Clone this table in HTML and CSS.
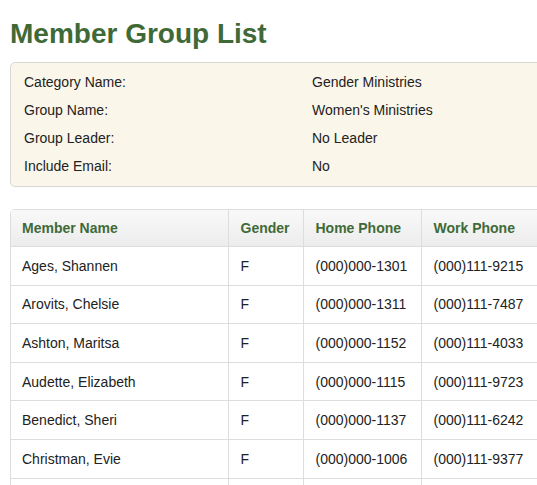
FILE: index.html
```html
<!DOCTYPE html>
<html>
<head>
<meta charset="utf-8">
<link rel="stylesheet" href="styles.css">
</head>
<body>
<h1 class="title">Member Group List</h1>
<div class="info">
  <div class="info-row"><span class="label">Category Name:</span><span class="value">Gender Ministries</span></div>
  <div class="info-row"><span class="label">Group Name:</span><span class="value">Women's Ministries</span></div>
  <div class="info-row"><span class="label">Group Leader:</span><span class="value">No Leader</span></div>
  <div class="info-row"><span class="label">Include Email:</span><span class="value">No</span></div>
</div>
<div class="table-wrap">
<table class="members">
  <colgroup><col class="c1"><col class="c2"><col class="c3"><col class="c4"></colgroup>
  <thead>
    <tr><th>Member Name</th><th>Gender</th><th>Home Phone</th><th>Work Phone</th></tr>
  </thead>
  <tbody>
    <tr><td>Ages, Shannen</td><td>F</td><td>(000)000-1301</td><td>(000)111-9215</td></tr>
    <tr><td>Arovits, Chelsie</td><td>F</td><td>(000)000-1311</td><td>(000)111-7487</td></tr>
    <tr><td>Ashton, Maritsa</td><td>F</td><td>(000)000-1152</td><td>(000)111-4033</td></tr>
    <tr><td>Audette, Elizabeth</td><td>F</td><td>(000)000-1115</td><td>(000)111-9723</td></tr>
    <tr><td>Benedict, Sheri</td><td>F</td><td>(000)000-1137</td><td>(000)111-6242</td></tr>
    <tr><td>Christman, Evie</td><td>F</td><td>(000)000-1006</td><td>(000)111-9377</td></tr>
    <tr><td></td><td></td><td></td><td></td></tr>
  </tbody>
</table>
</div>
</body>
</html>
```
FILE: styles.css
```css
html { overflow: hidden; }
body {
  margin: 0;
  padding: 0 0 0 10px;
  font-family: Arial, "Liberation Sans", sans-serif;
  font-size: 14px;
  color: #222;
  background: #fff;
}
.title {
  margin: 0;
  padding-top: 20px;
  height: 48px;
  box-sizing: border-box;
  font-size: 28px;
  line-height: 28px;
  font-weight: bold;
  color: #3f6a38;
}
.info {
  margin-top: 14px;
  width: 620px;
  background: #faf6ea;
  border: 1px solid #d8d8d4;
  border-radius: 5px;
  padding: 5px 0 6px 13px;
}
.info-row {
  display: flex;
  height: 28px;
  align-items: center;
}
.label { width: 288px; }
.table-wrap {
  margin-top: 22px;
  width: 640px;
  border: 1px solid #ddd;
  border-radius: 5px;
  overflow: hidden;
}
.members {
  border-collapse: collapse;
  table-layout: fixed;
  width: 100%;
}
.c1 { width: 217px; }
.c2 { width: 75px; }
.c3 { width: 118px; }
.members th, .members td {
  border-left: 1px solid #ddd;
  border-top: 1px solid #ddd;
  padding: 0 12px;
  height: 37.6px;
  text-align: left;
  white-space: nowrap;
}
.members tr > :first-child { border-left: none; padding-left: 11px; }
.members thead th {
  border-top: none;
  height: 36px;
  font-weight: bold;
  color: #3f6a38;
  background: linear-gradient(#f9f9f9, #ececec);
}
```
